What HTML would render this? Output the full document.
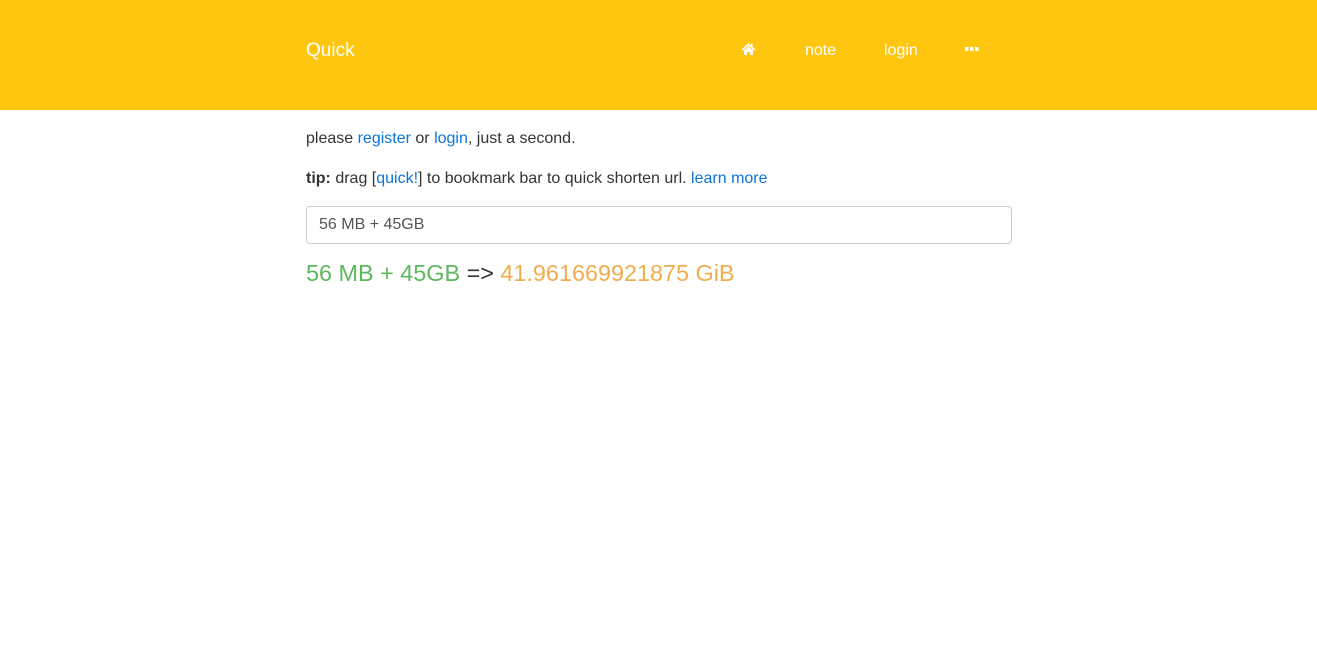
<!DOCTYPE html>
<html><head><style>
body{margin:0;font-family:"Liberation Sans",sans-serif;color:#333;font-size:16px;background:#fff}
.hd{height:110px;background:#ffc610;position:relative;color:#fff}
.hd span{position:absolute;top:42px;font-size:16px}
a{color:#0a74d8;text-decoration:none}
.c{position:absolute;left:306px}
</style></head><body>
<div class="hd">
<span style="left:306px;font-size:19px;top:40px">Quick</span>
<span style="left:741px;top:42px"><svg width="15" height="14" viewBox="0 0 15 14"><path d="M7.5 1L0.5 7.5 2 8.5 7.5 3.5 13 8.5 14.5 7.5 11.5 4.7V1.5H10V3.3Z M3 8.5L7.5 4.5 12 8.5V13H9V10H6V13H3Z" fill="#fff"/></svg></span>
<span style="left:805px">note</span>
<span style="left:884px">login</span>
<svg style="position:absolute;left:965px;top:47px" width="14" height="5" viewBox="0 0 14 5"><rect x="0" y="0" width="3.5" height="4" fill="#fff"/><rect x="5" y="0" width="3.5" height="4" fill="#fff"/><rect x="10" y="0" width="3.5" height="4" fill="#fff"/></svg>
</div>
<div class="c" style="top:130px">please <a>register</a> or <a>login</a>, just a second.</div>
<div class="c" style="top:170px"><b>tip:</b> drag [<a>quick!</a>] to bookmark bar to quick shorten url. <a>learn more</a></div>
<div class="c" style="top:206px;width:704px;height:36px;border:1px solid #ccc;border-radius:4px;"><div style="padding:9px 12px;color:#555">56 MB + 45GB</div></div>
<div class="c" style="top:260px;font-size:23.4px"><span style="color:#5cb85c">56 MB + 45GB</span> =&gt; <span style="color:#f0ad4e">41.961669921875 GiB</span></div>
</body></html>
